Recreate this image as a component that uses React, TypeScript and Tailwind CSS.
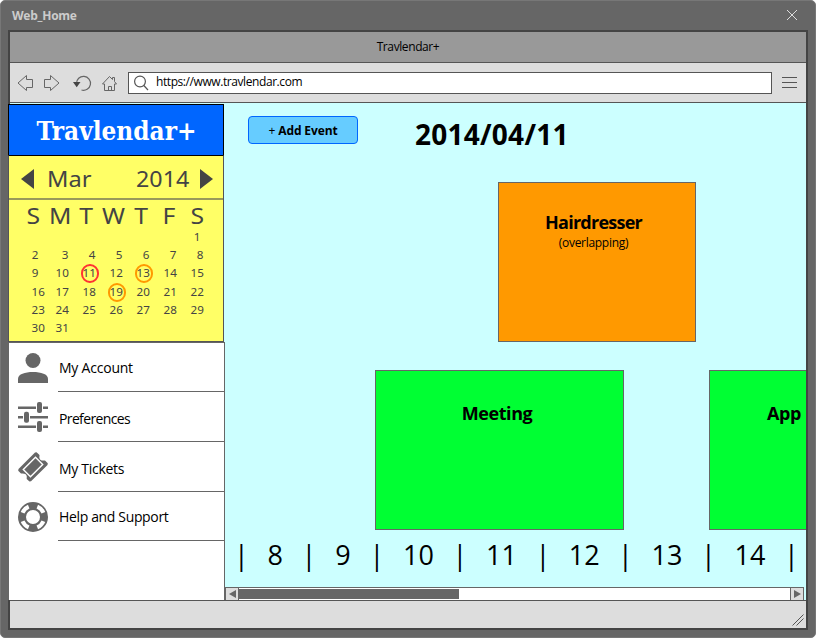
import React from "react";

const days = [
  ["", "", "", "", "", "", "1"],
  ["2", "3", "4", "5", "6", "7", "8"],
  ["9", "10", "11", "12", "13", "14", "15"],
  ["16", "17", "18", "19", "20", "21", "22"],
  ["23", "24", "25", "26", "27", "28", "29"],
  ["30", "31", "", "", "", "", ""],
];

const rings: Record<string, string> = {
  "11": "border-[#ff3333]",
  "13": "border-[#ff9900]",
  "19": "border-[#ff9900]",
};

const weekdays = [
  { d: "S", w: "w-[26px]" },
  { d: "M", w: "w-[27px]" },
  { d: "T", w: "w-[26px]" },
  { d: "W", w: "w-[28px]" },
  { d: "T", w: "w-[27px]" },
  { d: "F", w: "w-[29px]" },
  { d: "S", w: "w-[27px]" },
];

const hours = [
  { h: "8", w: "w-[51.5px]" },
  { h: "9", w: "w-[52px]" },
  { h: "10", w: "w-[67px]" },
  { h: "11", w: "w-[67px]" },
  { h: "12", w: "w-[66.5px]" },
  { h: "13", w: "w-[67px]" },
  { h: "14", w: "w-[67px]" },
];

function Toolbar() {
  return (
    <div className="flex h-10 items-center border-b border-[#555] bg-[#ddd]">
      <svg className="ml-[7px] h-[18px] w-[102px] shrink-0" viewBox="0 0 102 18" fill="none" stroke="#666" strokeWidth="1">
        <path d="M1 9 9.5 1.5V5.5H15.500V13.500H9.500V16.500Z" />
        <path d="M42 9 33.500 1.500V5.500H27.500V13.500H33.500V16.500Z" />
        <path d="M59.500 9.500A7 7 0 1 1 64.500 16" strokeWidth="1.200" />
        <path d="M56 8H63.500L59.700 13.200Z" fill="#444" stroke="none" />
        <path d="M85.500 10 92.500 2.500 95.500 5.500V3.500H97.500V7.500L99.500 10H97.500V16.500H87.500V10Z" />
        <path d="M91.500 16.500V12.500H94.500V16.500" />
      </svg>
      <div className="ml-[9px] flex h-[22px] w-[644px] items-center border border-[#555] bg-white">
        <svg className="ml-1 h-4 w-4" viewBox="0 0 16 16" fill="none" stroke="#555" strokeWidth="1.2">
          <circle cx="7" cy="6.500" r="5.400" />
          <path d="M10.800 10.500 15 15" />
        </svg>
        <span className="-mt-px ml-[7px] text-[12px] leading-4 tracking-[-0.42px] text-black">https://www.travlendar.com</span>
      </div>
      <div className="ml-[10px] flex w-[15px] flex-col gap-1">
        <div className="h-px bg-[#555]" />
        <div className="h-px bg-[#555]" />
        <div className="h-px bg-[#555]" />
      </div>
    </div>
  );
}

function Calendar() {
  return (
    <div className="-mt-px h-[187px] w-[216px] border border-[#555] border-t-black bg-[#ffff66] font-['Noto_Sans'] text-[#444]">
      <div className="flex h-[44px] items-center border-b-2 border-[#99995a] pl-3 pr-[9px] pt-[3px]">
        <svg className="h-5 w-[14px]" viewBox="0 0 14 20"><path d="M0 10 13 0V20Z" fill="#444" /></svg>
        <span className="ml-[12px] origin-left scale-x-[1.1] text-[21.500px] leading-[30px]">Mar</span>
        <span className="ml-auto origin-right scale-x-[1.08] text-[21.500px] leading-[30px]">2014</span>
        <svg className="ml-[11px] h-5 w-[14px]" viewBox="0 0 14 20"><path d="M0 0 13 10 0 20Z" fill="#444" /></svg>
      </div>
      <div className="flex h-[28px] items-center pl-[11.500px] pt-[3px] text-[22.500px] leading-[28px]">
        {weekdays.map((x, i) => (
          <div key={i} className={"flex justify-center " + x.w}>
            <span className="scale-x-[1.1]">{x.d}</span>
          </div>
        ))}
      </div>
      {days.map((row, r) => (
        <div key={r} className="flex h-[18.200px] items-center pl-[16px] text-[11px] leading-[18px]">
          {row.map((d, c) => (
            <div
              key={c}
              className={
                c === 0
                  ? "w-[16px] pl-[7px]"
                  : "flex justify-end " + (c === 1 ? "w-[27.500px]" : "w-[27px]") + (d === "1" ? " pr-[3px]" : "")
              }
            >
              <span className="relative inline-block">
                <span className="inline-block scale-x-[1.06]">{d}</span>
                {rings[d] && (
                  <span className={"absolute -left-[2px] top-0 h-[19px] w-[18px] rounded-full border-2 " + rings[d]} />
                )}
              </span>
            </div>
          ))}
        </div>
      ))}
    </div>
  );
}

function MenuItem({ icon, label, h, fit }: { icon: React.ReactNode; label: string; h: string; fit: string }) {
  return (
    <div className={"flex " + h}>
      <div className="flex w-[49px] items-center pl-[9px]">{icon}</div>
      <div className={"flex flex-1 items-center border-b border-[#666] pl-px text-[14px] text-black " + fit}>{label}</div>
    </div>
  );
}

const account = (
  <svg className="h-[30px] w-[30px]" viewBox="0 0 30 30" fill="#666">
    <circle cx="15" cy="7.500" r="7.500" />
    <path d="M0 30V26C0 21 7 19 15 19S30 21 30 26V30Z" />
  </svg>
);
const sliders = (
  <svg className="h-[30px] w-[30px]" viewBox="0 0 30 30" fill="#666">
    <path d="M0 4.500H18V7H0ZM25 4.500H30V7H25ZM0 14H5V16.500H0ZM12 14H30V16.500H12ZM0 23.500H18V26H0ZM25 23.500H30V26H25Z" />
    <rect x="19" y="0" width="5" height="11" rx="2" />
    <rect x="6" y="9.700" width="5" height="11" rx="2" />
    <rect x="19" y="19" width="5" height="11" rx="2" />
  </svg>
);
const ticket = (
  <svg className="h-[30px] w-[30px]" viewBox="0 0 30 30">
    <path d="M18.500 0.300 21.500 3Q20.800 6.500 22.300 7.700T27 8.500L29.800 11.300 29.500 13 13 29.300 11.500 29.600 8.700 27Q9.300 23.500 7.700 22.300T3 21.500L0.200 18.700 0.500 17 17 0.600Z" fill="#666" />
    <path d="M17.500 5.300 24.700 12.500 12.500 24.700 5.300 17.500Z" fill="none" stroke="white" strokeWidth="1.400" />
  </svg>
);
const lifebuoy = (
  <svg className="h-[30px] w-[30px]" viewBox="0 0 30 30" fill="none">
    <circle cx="15" cy="15" r="11" stroke="#666" strokeWidth="8" />
    <g stroke="white" strokeWidth="4">
      <path d="M19.300 4.600A11.300 11.300 0 0 1 25.400 10.700M25.400 19.300A11.300 11.300 0 0 1 19.300 25.400M10.700 25.400A11.300 11.300 0 0 1 4.600 19.300M4.600 10.700A11.300 11.300 0 0 1 10.700 4.600" />
    </g>
  </svg>
);

function Sidebar() {
  return (
    <div className="-ml-[2px] flex h-full w-[217px] shrink-0 flex-col pt-px">
      <div className="flex h-[52px] w-[216px] shrink-0 items-center justify-center border border-black bg-[#0066ff]">
        <span className="mt-[2px] scale-x-[0.995] whitespace-nowrap font-['DejaVu_Serif_Condensed','DejaVu_Serif',serif] text-[26px] font-bold leading-none text-white">
          Travlendar+
        </span>
      </div>
      <Calendar />
      <div className="flex-1 border-x border-t border-[#666] bg-white">
        <MenuItem icon={account} label="My Account" h="h-[49px]" fit="pt-px tracking-[-0.22px]" />
        <MenuItem icon={sliders} label="Preferences" h="h-[50px]" fit="pt-[3px] tracking-[-0.63px]" />
        <MenuItem icon={ticket} label="My Tickets" h="h-[50px]" fit="pt-[3px] tracking-[-0.3px]" />
        <MenuItem icon={lifebuoy} label="Help and Support" h="h-[49px]" fit="pt-px tracking-[-0.35px]" />
      </div>
    </div>
  );
}

function Timeline() {
  return (
    <div className="flex min-w-0 flex-1 flex-col overflow-hidden text-black">
      <div className="flex h-[79px] shrink-0 pl-[23px] pt-[13px]">
        <button className="h-7 w-[110px] rounded-[4px] border border-[#0066ff] bg-[#66ccff] pt-[2px] text-[12px] font-bold tracking-[-0.12px]">
          <span className="font-normal">+</span> Add Event
        </button>
        <div className="ml-[57px] whitespace-nowrap text-[28px] font-bold leading-9 tracking-[0.25px]">2014/04/11</div>
      </div>
      <div className="ml-[273px] h-[160px] w-[198px] shrink-0 border border-[#666] bg-[#ff9900] pr-[7px] pt-[27px] text-center">
        <div className="text-[18px] font-bold leading-6 tracking-[-0.75px]">Hairdresser</div>
        <div className="pt-px text-[12px] leading-4 tracking-[-0.3px]">(overlapping)</div>
      </div>
      <div className="mt-7 flex h-[160px] shrink-0 pl-[150px] text-[18px] font-bold leading-6 tracking-[-0.4px]">
        <div className="w-[249px] shrink-0 border border-[#666] bg-[#00ff33] pr-[5px] pt-[30px] text-center">Meeting</div>
        <div className="ml-[85px] w-[249px] shrink-0 border border-[#666] bg-[#00ff33] pl-[57px] pt-[30px]">App</div>
      </div>
      <div className="flex h-[57px] shrink-0 items-center pb-[7px] pl-[8.500px] text-[27px] leading-9">
        {hours.map((x) => (
          <React.Fragment key={x.h}>
            <span className="w-4 shrink-0 text-center">|</span>
            <span className={"shrink-0 text-center " + x.w}>{x.h}</span>
          </React.Fragment>
        ))}
        <span className="w-4 shrink-0 text-center">|</span>
      </div>
      <div className="flex h-[13px] w-[579px] shrink-0 border-x border-t border-[#666] bg-white">
        <div className="flex w-[13px] items-center justify-center border-r border-[#666] bg-[#ddd]">
          <svg className="h-2 w-[7px]" viewBox="0 0 7 8"><path d="M0 4 7 0V8Z" fill="#666" /></svg>
        </div>
        <div className="mt-px h-[10px] w-[220px] bg-[#666]" />
        <div className="ml-auto flex w-[13px] items-center justify-center border-l border-[#666] bg-[#ddd]">
          <svg className="h-2 w-[7px]" viewBox="0 0 7 8"><path d="M0 0 7 4 0 8Z" fill="#666" /></svg>
        </div>
      </div>
    </div>
  );
}

export default function App() {
  return (
    <div className="h-[638px] w-[816px] bg-white font-['Open_Sans','Noto_Sans',sans-serif]">
      <div className="flex h-full flex-col rounded-[5px] border border-[#777] bg-[#666] px-[7px] pb-[7px]">
        <div className="flex h-[29px] shrink-0 items-center justify-between pl-1 pr-[11px]">
          <span className="text-[12px] font-bold tracking-[-0.25px] text-[#ccc]">Web_Home</span>
          <svg className="-mt-[2px] h-[10px] w-[10px]" viewBox="0 0 10 10" stroke="#ddd" fill="none"><path d="M0 0 10 10M10 0 0 10" /></svg>
        </div>
        <div className="flex flex-1 flex-col border-2 border-[#444]">
          <div className="flex h-[31px] items-center justify-center border-b border-[#555] bg-[#999] text-[12px] tracking-[-0.4px] text-black">
            Travlendar+
          </div>
          <Toolbar />
          <div className="flex h-[497px] shrink-0 bg-[#ccffff]">
            <Sidebar />
            <Timeline />
          </div>
          <div className="flex flex-1 items-end justify-end border-t border-[#555] bg-[#ddd] pb-[2px] pr-[2px]">
            <svg className="h-3 w-3" viewBox="0 0 12 12" stroke="#555" fill="none"><path d="M0.500 11.500 11.500 0.500M4.500 11.500 11.500 4.500" /></svg>
          </div>
        </div>
      </div>
    </div>
  );
}
